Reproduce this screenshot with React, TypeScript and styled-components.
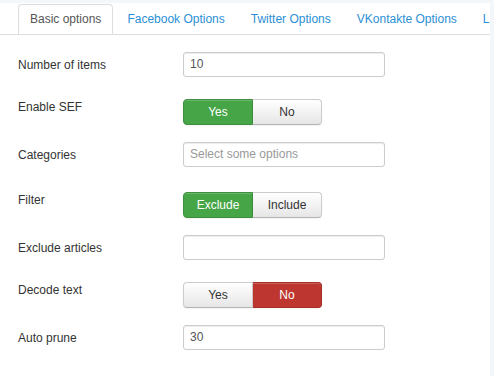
import React from 'react'
import styled, { createGlobalStyle, css } from 'styled-components'

const GlobalStyle = createGlobalStyle`
  html, body {
    margin: 0;
    padding: 0;
    background: #f4f7fa;
  }
  body {
    font-family: 'Liberation Sans', Arial, sans-serif;
    font-size: 12px;
    color: #333;
  }
`

const Page = styled.div`
  height: 376px;
  padding: 3px 4px 0 0;
  box-sizing: border-box;
  overflow: hidden;
`

const Panel = styled.div`
  background: #fff;
  height: 100%;
  overflow: hidden;
`

const TabBar = styled.ul`
  display: flex;
  margin: 0;
  padding: 1px 0 0 18px;
  list-style: none;
  border-bottom: 1px solid #ddd;
  white-space: nowrap;
  overflow: hidden;
`

const Tab = styled.li<{ $active?: boolean }>`
  flex: none;
  margin: 0 2px -1px 0;
  padding: 0 11px;
  line-height: 29px;
  border: 1px solid transparent;
  border-radius: 4px 4px 0 0;
  color: #2b8fd6;
  ${(p) =>
    p.$active &&
    css`
      color: #555;
      border-color: #ddd #ddd #fff;
      background: #fff;
    `}
`

const Form = styled.div`
  padding: 17px 0 0 18px;
`

const ControlGroup = styled.div`
  display: flex;
  align-items: flex-start;
  margin-bottom: 17px;
`

const Label = styled.div`
  width: 165px;
  flex: none;
  padding-top: 5px;
  line-height: 16px;
  color: #333;
`

const Input = styled.div<{ $placeholder?: boolean; $chosen?: boolean }>`
  width: 202px;
  height: 25px;
  box-sizing: border-box;
  padding: 0 6px;
  line-height: 23px;
  border: 1px solid #ccc;
  border-radius: 3px;
  box-shadow: inset 0 1px 1px rgba(0, 0, 0, 0.075);
  color: ${(p) => (p.$placeholder ? '#999' : '#555')};
  margin-bottom: ${(p) => (p.$chosen ? '3px' : '0')};
`

const BtnGroup = styled.div`
  display: flex;
  margin-top: 5px;
  width: 139px;
`

const tones = {
  default: css`
    color: #333;
    background: linear-gradient(#fff, #e6e6e6);
    border-color: #ccc #ccc #b3b3b3;
  `,
  success: css`
    color: #fff;
    background: #46a546;
    border-color: #3c8f3c;
  `,
  danger: css`
    color: #fff;
    background: #bd362f;
    border-color: #a52f29;
  `,
}

const Btn = styled.div<{ $tone: keyof typeof tones }>`
  flex: 1;
  height: 26px;
  box-sizing: border-box;
  line-height: 24px;
  text-align: center;
  border: 1px solid;
  box-shadow: inset 0 1px 0 rgba(255, 255, 255, 0.2), 0 1px 2px rgba(0, 0, 0, 0.05);
  ${(p) => tones[p.$tone]}
  &:first-child {
    border-radius: 4px 0 0 4px;
  }
  &:last-child {
    border-radius: 0 4px 4px 0;
    border-left: none;
  }
`

const tabs = ['Basic options', 'Facebook Options', 'Twitter Options', 'VKontakte Options', 'LinkedIn Options']

type Choice = { label: string; tone: keyof typeof tones }

const toggles: Record<string, Choice[]> = {
  sef: [
    { label: 'Yes', tone: 'success' },
    { label: 'No', tone: 'default' },
  ],
  filter: [
    { label: 'Exclude', tone: 'success' },
    { label: 'Include', tone: 'default' },
  ],
  decode: [
    { label: 'Yes', tone: 'default' },
    { label: 'No', tone: 'danger' },
  ],
}

const Toggle = ({ items }: { items: Choice[] }) => (
  <BtnGroup>
    {items.map((it) => (
      <Btn key={it.label} $tone={it.tone}>
        {it.label}
      </Btn>
    ))}
  </BtnGroup>
)

const App = () => (
  <>
    <GlobalStyle />
    <Page>
      <Panel>
        <TabBar>
          {tabs.map((t, i) => (
            <Tab key={t} $active={i === 0}>
              {t}
            </Tab>
          ))}
        </TabBar>
        <Form>
          <ControlGroup>
            <Label>Number of items</Label>
            <Input>10</Input>
          </ControlGroup>
          <ControlGroup>
            <Label>Enable SEF</Label>
            <Toggle items={toggles.sef} />
          </ControlGroup>
          <ControlGroup>
            <Label>Categories</Label>
            <Input $placeholder $chosen>
              Select some options
            </Input>
          </ControlGroup>
          <ControlGroup>
            <Label>Filter</Label>
            <Toggle items={toggles.filter} />
          </ControlGroup>
          <ControlGroup>
            <Label>Exclude articles</Label>
            <Input />
          </ControlGroup>
          <ControlGroup>
            <Label>Decode text</Label>
            <Toggle items={toggles.decode} />
          </ControlGroup>
          <ControlGroup>
            <Label>Auto prune</Label>
            <Input>30</Input>
          </ControlGroup>
        </Form>
      </Panel>
    </Page>
  </>
)

export default App
